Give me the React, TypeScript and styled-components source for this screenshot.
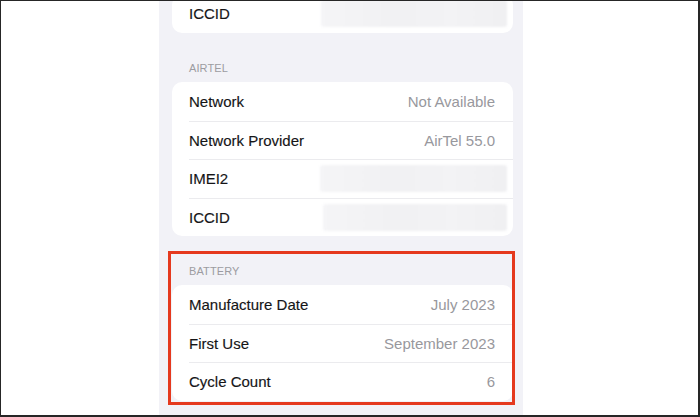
import * as React from 'react';
import styled, { createGlobalStyle } from 'styled-components';

const GlobalStyle = createGlobalStyle`
    html, body {
        margin: 0;
        padding: 0;
        background: #ffffff;
    }
    * {
        box-sizing: border-box;
    }
`;

const Frame = styled.div`
    width: 700px;
    height: 417px;
    overflow: hidden;
    background: #ffffff;
    border-style: solid;
    border-color: #262626;
    border-width: 1px 2px 2px 1px;
    padding-left: 158px;
    font-family: "Liberation Sans", Arial, sans-serif;
`;

const Screen = styled.div`
    width: 364px;
    height: 100%;
    background: #f2f2f7;
    padding: 0 10px 0 13px;
    display: flex;
    flex-direction: column;
`;

const Scroll = styled.div`
    margin-top: -6.5px;
    display: flex;
    flex-direction: column;
`;

const Section = styled.section<{ $highlight?: boolean }>`
    position: relative;
    display: flex;
    flex-direction: column;

    &::after {
        content: '';
        display: ${p => (p.$highlight ? 'block' : 'none')};
        position: absolute;
        top: 15px;
        left: -4px;
        right: -2px;
        bottom: -4px;
        border: 3px solid #e5391e;
        pointer-events: none;
    }
`;

const Header = styled.div`
    padding: 29px 0 7px 17px;
    font-size: 11px;
    line-height: 13px;
    color: #9c9ca1;
    text-transform: uppercase;
    letter-spacing: 0.1px;
`;

const Card = styled.div`
    background: #ffffff;
    border-radius: 10px;
    overflow: hidden;
`;

const Row = styled.div`
    height: 38.5px;
    margin-left: 17px;
    padding-right: 18px;
    display: flex;
    align-items: center;
    justify-content: space-between;
    font-size: 15px;
    color: #151517;
    -webkit-text-stroke: 0.15px #151517;

    & + & {
        border-top: 1px solid #ebebee;
    }
`;

const Value = styled.span`
    color: #98989d;
    -webkit-text-stroke: 0;
`;

const Redacted = styled.div<{ $width: number }>`
    width: ${p => p.$width}px;
    height: 27px;
    margin-right: -12px;
    border-radius: 3px;
    background: linear-gradient(90deg, #f5f5f7 0%, #f1f1f3 40%, #f3f3f5 70%, #f0f0f2 100%);
    filter: blur(0.8px);
`;

type Item = { label: string; value?: string; redacted?: number };

const sections: { title?: string; highlight?: boolean; items: Item[] }[] = [
    { items: [{ label: 'ICCID', redacted: 186 }] },
    {
        title: 'Airtel',
        items: [
            { label: 'Network', value: 'Not Available' },
            { label: 'Network Provider', value: 'AirTel 55.0' },
            { label: 'IMEI2', redacted: 187 },
            { label: 'ICCID', redacted: 184 },
        ],
    },
    {
        title: 'Battery',
        highlight: true,
        items: [
            { label: 'Manufacture Date', value: 'July 2023' },
            { label: 'First Use', value: 'September 2023' },
            { label: 'Cycle Count', value: '6' },
        ],
    },
];

export default function App() {
    return (
        <>
            <GlobalStyle />
            <Frame>
                <Screen>
                    <Scroll>
                        {sections.map((section, i) => (
                            <Section key={i} $highlight={section.highlight}>
                                {section.title && <Header>{section.title}</Header>}
                                <Card>
                                    {section.items.map(item => (
                                        <Row key={item.label}>
                                            <span>{item.label}</span>
                                            {item.redacted
                                                ? <Redacted $width={item.redacted} />
                                                : <Value>{item.value}</Value>}
                                        </Row>
                                    ))}
                                </Card>
                            </Section>
                        ))}
                    </Scroll>
                </Screen>
            </Frame>
        </>
    );
}
